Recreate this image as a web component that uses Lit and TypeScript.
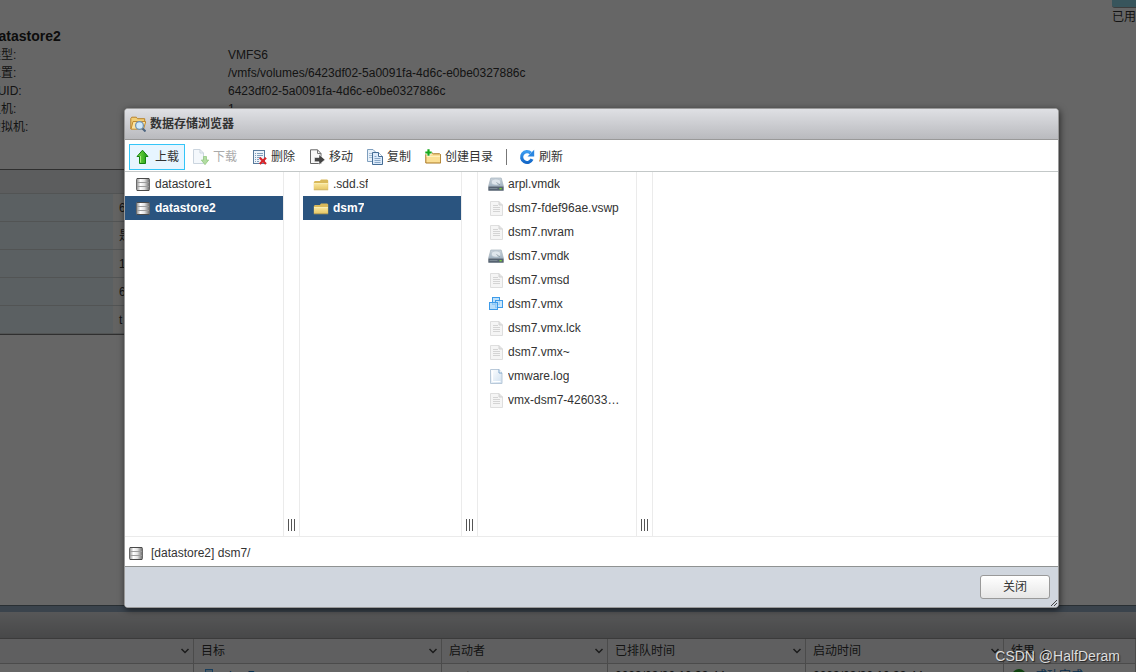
import { LitElement, html, css, svg } from "lit";
import { customElement, property, state } from "lit/decorators.js";
import { classMap } from "lit/directives/class-map.js";

const defs = svg`
  <linearGradient id="metal" x1="0" x2="1"><stop offset="0" stop-color="#8a8a8a"/><stop offset=".3" stop-color="#fff"/><stop offset=".6" stop-color="#e4e4e4"/><stop offset="1" stop-color="#6a6a6a"/></linearGradient>
  <linearGradient id="gold" x1="0" x2="0" y1="0" y2="1"><stop offset="0" stop-color="#fbe9a0"/><stop offset="1" stop-color="#e6c766"/></linearGradient>
  <linearGradient id="green" x1="0" x2="1"><stop offset="0" stop-color="#7ede4a"/><stop offset="1" stop-color="#1a9a12"/></linearGradient>
  <linearGradient id="steel" x1="0" x2="0" y1="0" y2="1"><stop offset="0" stop-color="#cdd6de"/><stop offset="1" stop-color="#9fb0bf"/></linearGradient>
  <linearGradient id="paper" x1="0" x2="1" y1="0" y2="1"><stop offset="0" stop-color="#fff"/><stop offset="1" stop-color="#cfe0f0"/></linearGradient>
  <linearGradient id="azure" x1="0" x2="0" y1="0" y2="1"><stop offset="0" stop-color="#3a9bf0"/><stop offset="1" stop-color="#1468c8"/></linearGradient>`;

const shapes: Record<string, unknown> = {
  datastore: svg`
    <rect x="1.500" y="2.500" width="13" height="12" rx="1" fill="url(#metal)" stroke="#6a6a6a"/>
    <path d="M2 6.500h12M2 10.500h12" stroke="#9c9c9c" fill="none"/>
    <path d="M2 2.500h12M2 14.500h12" stroke="#4a4a4a" fill="none"/>`,
  folder: svg`
    <path d="M.8 13.500V6.200l1-1.200h5l1.200-1.500h6.200l1 1v9z" fill="#d9b95a"/>
    <path d="M1 13.500V7h13.800v6.500z" fill="url(#gold)"/>
    <path d="M1 7.500h14" stroke="#f9efbb" stroke-width=".7"/>
    <path d="M.8 13.800h14.400" stroke="#c6a850" stroke-width=".8"/>`,
  disk: svg`
    <path d="M2.800 2h10.400l2.300 8.500H.5z" fill="url(#steel)" stroke="#a5b1bc" stroke-width=".7"/>
    <ellipse cx="8" cy="6" rx="4.600" ry="3" fill="#dfe6ec" stroke="#b4c0ca" stroke-width=".6"/>
    <path d="M8.500 6.500l3.500 2.500" stroke="#8794a0" stroke-width=".8"/>
    <rect x=".3" y="10.500" width="15.400" height="4.300" rx=".6" fill="#566371"/>
    <path d="M1.500 12.500h8" stroke="#7c8995"/>
    <rect x="11.500" y="12" width="2.200" height="1.400" fill="#7bd33b"/>`,
  file: svg`
    <path d="M2.500 1.500h8.500l3.500 3.500v10.500H2.500z" fill="#f5f5f5" stroke="#dedede"/>
    <path d="M11 1.500v3.500h3.500" fill="#e2e2e2" stroke="#d2d2d2"/>
    <path d="M5 5.500h5M5 7.500h7M5 9.500h7M5 11.500h7" stroke="#d4d4d4"/>`,
  log: svg`
    <path d="M2.500 1.500h8.500l3 3.500v10.500H2.500z" fill="url(#paper)" stroke="#b9c9d9"/>
    <path d="M11 1.500v3.500h3" fill="#fff" stroke="#7fa6cc"/>
    <path d="M4.500 3v10.500h8" fill="none" stroke="#fff"/>`,
  vm: svg`
    <rect x="4.500" y="1.500" width="7" height="7" fill="#bfe2fb" stroke="#3d9be9"/>
    <rect x="7.500" y="4.500" width="7" height="7" fill="#bfe2fb" fill-opacity=".8" stroke="#3d9be9"/>
    <rect x="1.500" y="6.500" width="8" height="7" fill="#a4d5f9" fill-opacity=".8" stroke="#3d9be9"/>`,
  browse: svg`
    <path d="M.8 13V2.500l1-1.300h4.500l1.200 1.500h7.200v3" fill="#f2cf77" stroke="#b8822b"/>
    <path d="M1 13.200L3 5.500h12.800L13.500 13.200z" fill="#fbe3a0" stroke="#c08a30"/>
    <circle cx="9.500" cy="9.500" r="3.900" fill="#cfe9fb" stroke="#7393b0" stroke-width="1.300"/>
    <path d="M12.500 12.500l3 3" stroke="#4c6580" stroke-width="2"/>`,
  upload: svg`
    <path d="M7.500 1.200L13 7.500h-2.500v7h-6v-7H2z" fill="url(#green)" stroke="#15800f" stroke-linejoin="round"/>
    <path d="M5.500 13.500V7" stroke="#a5ee7c"/>`,
  download: svg`
    <path d="M.5.500h6.500l3.500 3.500v10.500H.500z" fill="#f4f8fc" stroke="#cbd5df"/>
    <path d="M7 .500v3.500h3.500" fill="none" stroke="#cbd5df"/>
    <path d="M10.500 7.500h3v3.500h2.200L12 15.700 8.300 11h2.200z" fill="#b2dca2" stroke="#8cc679" stroke-width=".7"/>`,
  remove: svg`
    <rect x="2.500" y="1.500" width="11" height="13" fill="#eef4fa" stroke="#587a9c"/>
    <path d="M4 4.500h1M6 4.500h6M4 6.500h1M6 6.500h6M4 8.500h1M6 8.500h4M4 10.500h1M6 10.500h2M4 12.500h1M6 12.500h2" stroke="#83a0bc"/>
    <path d="M8.800 8.800l6.200 6.200M15 8.800l-6.200 6.200" stroke="#d9252a" stroke-width="2.200"/>`,
  move: svg`
    <path d="M1.500.800h7l3.500 3.700v10H1.500z" fill="#f7f7f7" stroke="#666"/>
    <path d="M8.500.800v3.700H12" fill="none" stroke="#777"/>
    <path d="M5.500 8.500h4.500V5.500l6 5.200-6 5v-3H5.500z" fill="#444" stroke="#fff" stroke-width=".5"/>`,
  copy: svg`
    <path d="M.5.500h5.500l3 3v9H.500z" fill="#e8f1fa" stroke="#7f9fbe"/>
    <path d="M2 4.500h3M2 6.500h3M2 8.500h3" stroke="#a7bfd6"/>
    <path d="M5.500 3.500h6l4 4v8h-10z" fill="#dceafa" stroke="#456c94"/>
    <path d="M11.500 3.500v4h4" fill="#fff" stroke="#456c94"/>
    <path d="M7.500 7.500h2M7.500 9.500h6M7.500 11.500h6M7.500 13.500h6" stroke="#89a8c7"/>`,
  create: svg`
    <path d="M.8 14V4.500l1-1h5l1.400 1.300h6.500l1 1V14z" fill="#fbdf94" stroke="#a87622"/>
    <path d="M1.500 7.500h13.500" stroke="#fff0bd"/>
    <path d="M3.500 0v7M0 3.500h7" stroke="#fff" stroke-width="3.400"/>
    <path d="M3.500.300v6.400M.300 3.500h6.400" stroke="#18a81c" stroke-width="2.200"/>`,
  refresh: svg`
    <path d="M11.800 4.200A5.400 5.400 0 1 0 13 10.200" fill="none" stroke="url(#azure)" stroke-width="3.200"/>
    <path d="M8.500 7.500h6.700V.800z" fill="#2a86e0"/>`,
  done: svg`<circle cx="8" cy="8" r="7" fill="#2aa52a"/><path d="M4.500 8l2.500 3 4.500-6" fill="none" stroke="#fff" stroke-width="1.600"/>`,
  chevron: svg`<path d="M4.500 6l3.500 3.500L11.500 6" fill="none" stroke="#444" stroke-width="1.500"/>`,
};

@customElement("ui-icon")
class UiIcon extends LitElement {
  static styles = css`
    :host { display: block; flex: none; width: 16px; height: 16px; }
    .glyph { display: block; width: 16px; height: 16px; }
  `;
  @property() name = "";
  render() {
    return html`<svg class="glyph" viewBox="0 0 16 16" aria-hidden="true"><defs>${defs}</defs>${shapes[this.name]}</svg>`;
  }
}

type Entry = { icon: string; label: string };

@customElement("file-column")
class FileColumn extends LitElement {
  static styles = css`
    :host { display: block; flex: none; }
    .list { list-style: none; margin: 0; padding: 0; }
    .row {
      display: flex; align-items: center; gap: 4px; width: 100%; height: 24px;
      padding: 0 16px 0 10px; border: 0; background: none; text-align: left;
      font: inherit; color: #333; cursor: pointer;
    }
    .label { overflow: hidden; text-overflow: ellipsis; white-space: nowrap; }
    .selected { background: #2a547f; color: #fff; font-weight: bold; }
  `;
  @property({ attribute: false }) entries: Entry[] = [];
  @state() private picked = "";
  @property() selected = "";
  render() {
    const current = this.picked || this.selected;
    return html`<ul class="list">
      ${this.entries.map((e) => html`<li>
        <button class=${classMap({ row: true, selected: e.label === current })} @click=${() => (this.picked = e.label)}>
          <ui-icon name=${e.icon}></ui-icon><span class="label">${e.label}</span>
        </button></li>`)}
    </ul>`;
  }
}

const stores: Entry[] = [
  { icon: "datastore", label: "datastore1" },
  { icon: "datastore", label: "datastore2" },
];
const folders: Entry[] = [
  { icon: "folder", label: ".sdd.sf" },
  { icon: "folder", label: "dsm7" },
];
const files: Entry[] = [
  { icon: "disk", label: "arpl.vmdk" },
  { icon: "file", label: "dsm7-fdef96ae.vswp" },
  { icon: "file", label: "dsm7.nvram" },
  { icon: "disk", label: "dsm7.vmdk" },
  { icon: "file", label: "dsm7.vmsd" },
  { icon: "vm", label: "dsm7.vmx" },
  { icon: "file", label: "dsm7.vmx.lck" },
  { icon: "file", label: "dsm7.vmx~" },
  { icon: "log", label: "vmware.log" },
  { icon: "file", label: "vmx-dsm7-426033…" },
];
const tools = [
  { icon: "upload", label: "上载", active: true },
  { icon: "download", label: "下载", disabled: true },
  { icon: "remove", label: "删除" },
  { icon: "move", label: "移动" },
  { icon: "copy", label: "复制" },
  { icon: "create", label: "创建目录" },
];
const facts = [
  ["类型:", "VMFS6"],
  ["位置:", "/vmfs/volumes/6423df02-5a0091fa-4d6c-e0be0327886c"],
  ["UUID:", "6423df02-5a0091fa-4d6c-e0be0327886c"],
  ["主机:", "1"],
  ["虚拟机:", ""],
];

@customElement("app-root")
class AppRoot extends LitElement {
  static styles = css`
    :host {
      display: block; position: relative; height: 100vh; overflow: hidden; background: #fff;
      font: 12px/18px "Liberation Sans", Arial, "Noto Sans CJK SC", sans-serif; color: #333;
    }
    .page { display: flex; flex-direction: column; height: 100%; color: #333; }
    .main { flex: 1; min-height: 0; overflow: hidden; display: flex; justify-content: space-between; }
    .details { flex: 1; min-width: 0; padding-top: 27px; }
    .name { margin: 0 0 0 -10px; font-size: 14px; line-height: 18px; color: #222; }
    .facts { display: grid; grid-template-columns: 239px 1fr; margin: 1px 0 0 -11px; }
    .fact { margin: 0; height: 18px; white-space: nowrap; }
    .summary { width: 50%; margin-top: 33px; border-spacing: 0; border-top: 1px solid #777; border-bottom: 1px solid #777; }
    .summary th, .summary td { padding: 0; height: 27px; border-bottom: 1px solid #ccd2d2; text-align: left; }
    .summary th { background: #e3eff5; width: 113px; }
    .summary .caption { background: #e6e9eb; height: 23px; }
    .summary td { padding-left: 6px; background: #f8f8f6; }
    .usage { flex: none; width: 24px; overflow: hidden; white-space: nowrap; }
    .meter { height: 7px; background: #8cd5e6; border-bottom: 1px solid #999; border-radius: 0 0 0 3px; }
    .tasks { flex: none; height: 67px; overflow: hidden; }
    .divider { height: 6px; background: #91a8be; border-top: 1px solid #687581; }
    .bar { height: 26px; background: linear-gradient(#d9dadc, #b3b4b6); border-bottom: 1px solid #949494; }
    .grid { width: 100%; table-layout: fixed; border-spacing: 0; }
    .grid th { height: 25px; padding: 0 0 0 7px; font-weight: normal; text-align: left; background: #edeef0; border-right: 1px solid #bcbcbc; border-bottom: 1px solid #bcbcbc; box-sizing: border-box; }
    .grid td { height: 24px; padding: 0 7px; border-right: 1px solid #bcbcbc; white-space: nowrap; }
    .head, .cell { display: flex; align-items: center; justify-content: space-between; }
    .cell { justify-content: flex-start; gap: 8px; }
    .c1 { width: 194px; } .c2 { width: 248px; } .c3 { width: 166px; } .c4, .c5 { width: 198px; }
    .link { color: #1670b8; text-decoration: none; }
    .veil { position: absolute; inset: 0; display: flex; padding: 108px 77px 64px 124px; background: rgba(0, 0, 0, 0.6); }
    .dialog {
      position: relative; flex: 1; min-width: 0; display: flex; flex-direction: column; overflow: hidden;
      background: #fff; border: 1px solid #999; border-radius: 4px; box-shadow: 1px 2px 7px rgba(0, 0, 0, 0.6);
    }
    .title { display: flex; align-items: center; gap: 4px; height: 30px; padding-left: 5px; background: linear-gradient(#dfe0e4, #b9babe); border-bottom: 1px solid #999; }
    .title h2 { margin: 0; font-size: 12px; line-height: 18px; }
    .toolbar { display: flex; align-items: center; gap: 2px; height: 31px; padding: 0 4px; border-bottom: 1px solid #c3c8c8; }
    .tool { display: flex; align-items: center; gap: 4px; height: 26px; margin-top: 2px; padding: 0 5px; border: 1px solid transparent; background: none; font: inherit; color: #333; }
    .active { border-color: #33c5f8; background: #e7f5ff; }
    .tool:disabled { color: #aaa; }
    .rule { width: 1px; height: 16px; margin: 2px 4px 0 5px; background: #777; }
    .columns { flex: 1; min-height: 0; display: flex; }
    .stores, .files { width: 158px; }
    .folders { width: 158px; padding-left: 3px; }
    .split { flex: none; display: flex; align-items: flex-end; justify-content: center; width: 15px; padding-bottom: 5px; border: solid #ebebeb; border-width: 0 1px; }
    .grip { display: flex; box-sizing: border-box; width: 7px; height: 12px; border: solid #555; border-width: 0 1px; }
    .grip::before { content: ""; width: 1px; margin: 0 auto; background: #555; }
    .path { display: flex; align-items: center; gap: 7px; height: 27px; padding: 2px 0 0 3px; border-top: 1px solid #ebebeb; }
    .footer { display: flex; align-items: center; justify-content: flex-end; height: 40px; padding-right: 8px; background: #d0d6de; border-top: 1px solid #8f9292; }
    .close { width: 70px; height: 24px; padding: 0; border: 1px solid #999; border-radius: 3px; background: linear-gradient(#fff, #e6e6e6); font: inherit; color: #333; }
    .corner { position: absolute; right: 1px; bottom: 1px; width: 6px; height: 6px; }
    .mark { position: absolute; right: 16px; bottom: 6px; font-size: 14px; line-height: 20px; color: #ddd; text-shadow: 1px 1px 1px #222; }
  `;

  private split() {
    return html`<div class="split" role="separator"><div class="grip"></div></div>`;
  }

  private head(label: string) {
    return html`<div class="head"><span>${label}</span><ui-icon name="chevron"></ui-icon></div>`;
  }

  render() {
    return html`
      <div class="page">
        <main class="main">
          <section class="details">
            <h1 class="name">datastore2</h1>
            <dl class="facts">${facts.map(([k, v]) => html`<dt class="fact">${k}</dt><dd class="fact">${v}</dd>`)}</dl>
            <table class="summary">
              <tr><th class="caption" colspan="2"></th></tr>
              ${["6", "是", "1", "6", "t"].map((v) => html`<tr><th></th><td>${v}</td></tr>`)}
            </table>
          </section>
          <aside class="usage"><div class="meter"></div>已用</aside>
        </main>
        <section class="tasks">
          <div class="divider"></div>
          <div class="bar"></div>
          <table class="grid">
            <tr>
              <th class="c1">${this.head("")}</th><th class="c2">${this.head("目标")}</th><th class="c3">${this.head("启动者")}</th>
              <th class="c4">${this.head("已排队时间")}</th><th class="c5">${this.head("启动时间")}</th><th>结果 ▲</th>
            </tr>
            <tr>
              <td></td><td><div class="cell"><ui-icon name="vm"></ui-icon><a class="link" href="#">dsm7</a></div></td><td>root</td>
              <td>2023/03/30 10:33:44</td><td>2023/03/30 10:33:44</td>
              <td><div class="cell"><ui-icon name="done"></ui-icon><a class="link" href="#">成功完成</a></div></td>
            </tr>
          </table>
        </section>
      </div>
      <div class="veil">
        <section class="dialog" role="dialog" aria-labelledby="dialog-title">
          <header class="title"><ui-icon name="browse"></ui-icon><h2 id="dialog-title">数据存储浏览器</h2></header>
          <div class="toolbar" role="toolbar">
            ${tools.map((t) => html`<button class=${classMap({ tool: true, active: !!t.active })} ?disabled=${t.disabled}>
              <ui-icon name=${t.icon}></ui-icon><span>${t.label}</span></button>`)}
            <div class="rule"></div>
            <button class="tool"><ui-icon name="refresh"></ui-icon><span>刷新</span></button>
          </div>
          <div class="columns">
            <file-column class="stores" .entries=${stores} selected="datastore2"></file-column>${this.split()}
            <file-column class="folders" .entries=${folders} selected="dsm7"></file-column>${this.split()}
            <file-column class="files" .entries=${files}></file-column>${this.split()}
          </div>
          <div class="path"><ui-icon name="datastore"></ui-icon><span>[datastore2] dsm7/</span></div>
          <footer class="footer"><button class="close">关闭</button></footer>
          <svg class="corner" viewBox="0 0 6 6" aria-hidden="true"><path d="M0 6L6 0M3 6L6 3" stroke="#444" stroke-width="1"/></svg>
        </section>
      </div>
      <div class="mark">CSDN @HalfDeram</div>
    `;
  }
}
